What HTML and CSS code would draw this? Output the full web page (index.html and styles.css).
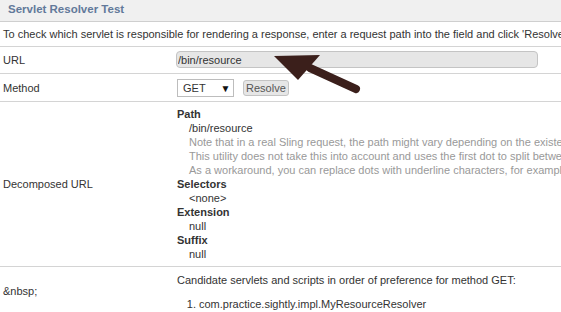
FILE: index.html
```html
<!DOCTYPE html>
<html lang="en">
<head>
    <meta charset="UTF-8">
    <title>Servlet Resolver Test</title>
    <link rel="stylesheet" href="styles.css">
</head>
<body>
    <div class="page">
        <div class="title">Servlet Resolver Test</div>
        <table class="content">
            <colgroup>
                <col class="label-col">
                <col>
            </colgroup>
            <tr>
                <td colspan="2" class="intro">To check which servlet is responsible for rendering a response, enter a request path into the field and click 'Resolve' to resolve it.</td>
            </tr>
            <tr>
                <td class="label">URL</td>
                <td><input type="text" class="url-input" value="/bin/resource"></td>
            </tr>
            <tr>
                <td class="label">Method</td>
                <td>
                    <span class="select">GET <span class="caret">&#9660;</span></span>
                    <button class="resolve-button">Resolve</button>
                </td>
            </tr>
            <tr>
                <td class="label">Decomposed URL</td>
                <td class="decomposed">
                    <dl>
                        <dt>Path</dt>
                        <dd>/bin/resource<br>
                            <span class="note">Note that in a real Sling request, the path might vary depending on the existence of resources that partially match it.<br>
                            This utility does not take this into account and uses the first dot to split between path and selectors/extension.<br>
                            As a workaround, you can replace dots with underline characters, for example, when testing such an URL.</span>
                        </dd>
                        <dt>Selectors</dt>
                        <dd>&lt;none&gt;</dd>
                        <dt>Extension</dt>
                        <dd>null</dd>
                        <dt>Suffix</dt>
                        <dd>null</dd>
                    </dl>
                </td>
            </tr>
            <tr>
                <td class="label">&amp;nbsp;</td>
                <td class="candidates">
                    <p>Candidate servlets and scripts in order of preference for method GET:</p>
                    <ol>
                        <li>com.practice.sightly.impl.MyResourceResolver</li>
                    </ol>
                </td>
            </tr>
        </table>
    </div>

    <!-- arrow pointing at the URL field -->
    <svg class="arrow" width="110" height="50" viewBox="0 0 110 50">
        <path d="M82 37 L36 16" stroke="#3b1f1b" stroke-width="8" stroke-linecap="round" fill="none"/>
        <polygon points="0,4 46,3 24,28" fill="#3b1f1b"/>
    </svg>
</body>
</html>
```

FILE: styles.css
```css
body {
    font-family: "Liberation Sans", Arial, sans-serif;
    font-size: 11px;
    color: #333;
    background-color: #fff;
    margin: 0;
    padding: 0;
    overflow: hidden;
}
.page {
    width: 561px;
    overflow: hidden;
}
.title {
    background-color: #f0f0f0;
    color: #62799a;
    font-weight: bold;
    padding: 3px 8px 0;
    height: 18px;
    font-size: 11.5px;
    border-bottom: 1px solid #cfcfcf;
}
.content {
    width: 561px;
    table-layout: fixed;
    border-collapse: collapse;
    white-space: nowrap;
}
.label-col {
    width: 174px;
}
.content td {
    border-bottom: 1px solid #d4d4d4;
    padding: 0 3px;
    vertical-align: middle;
    line-height: 14px;
}
.content .intro {
    height: 24px;
}
.url-input {
    width: 362px;
    height: 17px;
    margin: 4px 0 5px -1px;
    padding: 0 1px;
    border: 1px solid #c4c4c4;
    border-radius: 4px;
    background-color: #e6e6e6;
    font-family: inherit;
    font-size: 11px;
    color: #333;
    box-sizing: border-box;
}
.select {
    display: inline-block;
    width: 57px;
    height: 18px;
    margin: 5px 0 4px 0;
    padding-left: 5px;
    border: 1px solid #bdbdbd;
    box-sizing: border-box;
    line-height: 16px;
    vertical-align: middle;
}
.caret {
    font-size: 10px;
    margin-left: 12px;
    color: #111;
}
.resolve-button {
    height: 16px;
    margin-left: 6px;
    padding: 0 2px;
    border: 1px solid #c4c4c4;
    border-radius: 3px;
    background-color: #e6e6e6;
    color: #555;
    font-family: inherit;
    font-size: 11px;
    line-height: 14px;
    vertical-align: middle;
}
.decomposed dl {
    margin: 5px 0 5px;
}
.decomposed dt {
    font-weight: bold;
}
.decomposed dd {
    margin-left: 12px;
}
.note {
    color: #999;
}
.candidates p {
    margin: 6px 0 10px;
}
.candidates ol {
    margin: 0 0 4px;
    padding-left: 22px;
}
.arrow {
    position: absolute;
    left: 274px;
    top: 52px;
}
```
